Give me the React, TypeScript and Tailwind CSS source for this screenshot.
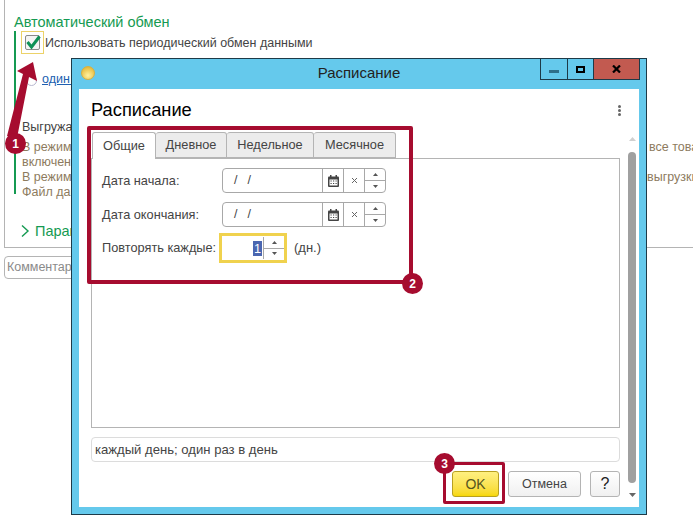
const RED = 'bg-[#a60c2f]';

function Spin({ className }: { className: string }) {
  return (
    <div className={`flex flex-col ${className}`}>
      <div className="flex-1 flex items-center justify-center border-b border-[#a8a8a8]">
        <svg width="5" height="3" viewBox="0 0 5 3"><polygon points="2.5 0 5 3 0 3" fill="#555" /></svg>
      </div>
      <div className="flex-1 flex items-center justify-center">
        <svg width="5" height="3" viewBox="0 0 5 3"><polygon points="0 0 5 0 2.5 3" fill="#555" /></svg>
      </div>
    </div>
  );
}

function DateField() {
  return (
    <div className="flex w-[164px] h-[25px] border border-[#a8a8a8] rounded-[4px] bg-white">
      <div className="w-[100px] pl-[11px] text-[12.5px] leading-[23px] text-[#444] whitespace-pre tracking-[1px]">{'/  /'}</div>
      <div className="w-[21px] border-l border-[#a8a8a8] flex items-center justify-center">
        <svg width="11" height="12" viewBox="0 0 11 12">
          <rect x="0" y="1.5" width="11" height="10.5" rx="1" fill="#444" />
          <rect x="1.5" y="4.5" width="8" height="6" fill="#fff" />
          <rect x="2" y="0" width="1.5" height="3" fill="#444" />
          <rect x="7.5" y="0" width="1.5" height="3" fill="#444" />
          <path d="M2.5 6h1.2M5 6h1.2M7.5 6h1.2M2.5 8.5h1.2M5 8.5h1.2M7.5 8.5h1.2" stroke="#444" strokeWidth="1.2" />
        </svg>
      </div>
      <div className="w-[21px] border-l border-[#a8a8a8] flex items-center justify-center">
        <svg width="7" height="7" viewBox="0 0 7 7"><path d="M1 1l5 5M6 1l-5 5" stroke="#666" strokeWidth="1" /></svg>
      </div>
      <Spin className="w-[21px] border-l border-[#a8a8a8]" />
    </div>
  );
}

function Background() {
  return (
    <div className="pl-[4px] text-[12px]">
      <div className="h-[248px] border-l border-b border-[#b4b4b4] pl-[9px] pt-[13px]">
        <div className="text-[14.5px] leading-[18px] text-[#159a52]">Автоматический обмен</div>
        <div className="mt-[3px] border-l-2 border-[#159a52] h-[163px] pl-[5px]">
          <div className="flex items-center -mt-[3px]">
            <div className="w-[23px] h-[23px] border-[1.5px] border-[#ecd268] flex items-center justify-center">
              <div className="w-[15px] h-[15px] border border-[#8a8a8a] rounded-[2px] bg-[#f4f4f4] flex items-center justify-center">
                <svg width="14" height="13" viewBox="0 0 14 13" className="overflow-visible">
                  <path d="M1.5 6l4 5L13.5 0.5" fill="none" stroke="#0f9156" strokeWidth="3" />
                </svg>
              </div>
            </div>
            <span className="ml-[1px] pt-[1px] text-[12.5px] text-[#444]">Использовать периодический обмен данными</span>
          </div>
          <div className="flex items-center mt-[18px] ml-[5px]">
            <div className="w-[11px] h-[11px] rounded-full border border-[#b8b8d0] bg-white" />
            <span className="ml-[5px] -mt-[2px] text-[12.5px] text-[#2060b0] underline whitespace-nowrap">один раз в день</span>
          </div>
          <div className="mt-[31px] ml-[1px] text-[12.5px] leading-[15px] text-[#444]">Выгружать данные</div>
          <div className="mt-[5px] ml-[1px] w-[674px] text-[12.5px] leading-[15px] text-[#8d7b5e]">
            <div className="flex justify-between">
              <span>В режиме</span>
              <span className="w-[47px] overflow-hidden whitespace-nowrap">все товары</span>
            </div>
            <div>включен</div>
            <div className="flex justify-between">
              <span>В режиме</span>
              <span className="w-[49px] overflow-hidden whitespace-nowrap">выгрузки</span>
            </div>
            <div>Файл данных</div>
          </div>
        </div>
        <div className="flex items-center mt-[28px] ml-[6px] text-[#159a52]">
          <svg width="10" height="14" viewBox="0 0 10 14">
            <path d="M2 1.5l6 5.5-6 5.5" fill="none" stroke="#159a52" strokeWidth="1.4" />
          </svg>
          <span className="ml-[5px] text-[14.5px] leading-[18px]">Параметры</span>
        </div>
      </div>
      <div className="mt-[8px] w-[300px] h-[23px] border border-[#b4b4b4] rounded-[4px] pl-[2px] text-[12.5px] leading-[21px] text-[#8a8a8a]">
        Комментарий
      </div>
    </div>
  );
}

function Dialog() {
  return (
    <div className="absolute left-[71px] top-[58px] w-[576px] h-[457px] border border-[#1d3a48] bg-[#65c9ec] flex flex-col">
      <div className="relative h-[30px] shrink-0 flex items-center justify-center">
        <div className="absolute left-[9px] top-[7px] w-[14px] h-[14px] rounded-full bg-[radial-gradient(circle_at_50%_70%,#fff2a0,#e0ac20)] border border-[#d8b040]" />
        <span className="text-[15px] text-[#222] -mt-[2px]">Расписание</span>
        <div className="absolute right-[6px] top-0 flex h-[21px] border border-t-0 border-[#1d3a48]">
          <div className="w-[27px] border-r border-[#1d3a48] flex items-end justify-center pb-[6px]">
            <div className="w-[10px] h-[3px] bg-[#2e6f8a]" />
          </div>
          <div className="w-[26px] border-r border-[#1d3a48] flex items-center justify-center">
            <div className="w-[9px] h-[7px] border-2 border-black" />
          </div>
          <div className="w-[45px] bg-[#c25a50] flex items-center justify-center">
            <svg width="9" height="8" viewBox="0 0 9 8"><path d="M1 0.5l7 7M8 0.5l-7 7" stroke="#000" strokeWidth="2.2" /></svg>
          </div>
        </div>
      </div>
      <div className="mx-[7px] flex-1 bg-white flex flex-col pl-[12px]">
        <div className="flex items-center justify-between h-[43px] shrink-0 pr-[18px]">
          <span className="text-[18.3px] text-black -mt-[2px]">Расписание</span>
          <div className="flex flex-col gap-[1px]">
            <div className="w-[3px] h-[3px] rounded-full bg-[#666]" />
            <div className="w-[3px] h-[3px] rounded-full bg-[#666]" />
            <div className="w-[3px] h-[3px] rounded-full bg-[#666]" />
          </div>
        </div>
        <div className="flex flex-1">
          <div className="w-[529px] flex flex-col">
            <div className="flex h-[26px] pl-[1px] text-[12.75px] text-[#444] relative z-10">
              <div className="w-[64px] h-[27px] border border-b-0 border-[#b4b4b4] rounded-t-[3px] bg-white flex items-center justify-center">Общие</div>
              <div className="w-[71px] border border-l-0 border-[#b4b4b4] rounded-t-[3px] bg-[#ececec] flex items-center justify-center">Дневное</div>
              <div className="w-[87px] border border-l-0 border-[#b4b4b4] rounded-t-[3px] bg-[#ececec] flex items-center justify-center">Недельное</div>
              <div className="w-[82px] border border-l-0 border-[#b4b4b4] rounded-t-[3px] bg-[#ececec] flex items-center justify-center">Месячное</div>
            </div>
            <div className="h-[270px] border border-[#b4b4b4] pl-[10px] pt-[9px] text-[12.75px] text-[#444]">
              <div className="flex items-center h-[25px]">
                <span className="w-[120px]">Дата начала:</span>
                <DateField />
              </div>
              <div className="flex items-center h-[25px] mt-[9px]">
                <span className="w-[120px]">Дата окончания:</span>
                <DateField />
              </div>
              <div className="flex items-center h-[30px] mt-[6px]">
                <span className="w-[117px] whitespace-nowrap">Повторять каждые:</span>
                <div className="w-[68px] h-[30px] border-[3px] border-[#f0d24e] flex items-center pl-[31px]">
                  <span className="bg-[#4a66b0] text-white h-[15px] leading-[15px] px-[1px]">1</span>
                  <div className="w-px h-[22px] bg-[#a8a8a8] ml-[1px]" />
                  <Spin className="w-[21px] h-[22px]" />
                </div>
                <span className="ml-[7px] text-[13px]">(дн.)</span>
              </div>
            </div>
            <div className="mt-[9px] h-[25px] border border-[#dcdcdc] rounded-[4px] pl-[3px] text-[13.1px] leading-[24px] text-[#444]">
              каждый день; один раз в день
            </div>
            <div className="flex justify-end mt-[9px] pb-[10px]">
              <div className="w-[47px] h-[26px] rounded-[3px] border border-[#b8a020] bg-gradient-to-b from-[#fff080] to-[#f7d800] text-[14px] text-[#555520] flex items-center justify-center">OK</div>
              <div className="ml-[9px] w-[73px] h-[26px] rounded-[3px] border border-[#b4b4b4] bg-gradient-to-b from-white to-[#f0f0f0] text-[12.5px] text-[#444] flex items-center justify-center">Отмена</div>
              <div className="ml-[9px] w-[30px] h-[26px] rounded-[3px] border border-[#b4b4b4] bg-gradient-to-b from-white to-[#f0f0f0] text-[16px] text-[#222] flex items-center justify-center">?</div>
            </div>
          </div>
          <div className="ml-[8px] w-[8px] flex flex-col items-center pt-[5px]">
            <svg width="7" height="4" viewBox="0 0 7 4"><polygon points="3.5 0 7 4 0 4" fill="#d0d0d0" /></svg>
            <div className="w-[8px] h-[331px] mt-[11px] rounded-[4px] bg-[#a0a0a0]" />
            <svg width="7" height="4" viewBox="0 0 7 4" className="mt-[10px]"><polygon points="0 0 7 0 3.5 4" fill="#666" /></svg>
          </div>
        </div>
      </div>
      <div className="h-[7px] shrink-0" />
    </div>
  );
}

function Badge({ n, className }: { n: number; className: string }) {
  return (
    <div className={`absolute w-[21px] h-[21px] rounded-full ${RED} text-white text-[12px] font-bold flex items-center justify-center ${className}`}>
      {n}
    </div>
  );
}

export default function App() {
  return (
    <div className="relative w-[693px] h-[520px] overflow-hidden bg-white font-['Liberation_Sans',Arial,sans-serif]">
      <Background />
      <Dialog />
      {/* пометки поверх скриншота */}
      <svg className="absolute left-0 top-0" width="60" height="150" viewBox="0 0 60 150">
        <polygon points="33,62 37,81 29,77 17,138 7,136 23,74 17,71" fill="#a60c2f" />
      </svg>
      <Badge n={1} className="left-[5px] top-[133px]" />
      <div className="absolute left-[87px] top-[126px] w-[326px] h-[158px] border-4 border-[#a60c2f] rounded-[2px]" />
      <Badge n={2} className="left-[402px] top-[273px]" />
      <div className="absolute left-[443px] top-[462px] w-[62px] h-[42px] border-[3px] border-[#a60c2f] rounded-[2px]" />
      <Badge n={3} className="left-[434px] top-[453px]" />
    </div>
  );
}
